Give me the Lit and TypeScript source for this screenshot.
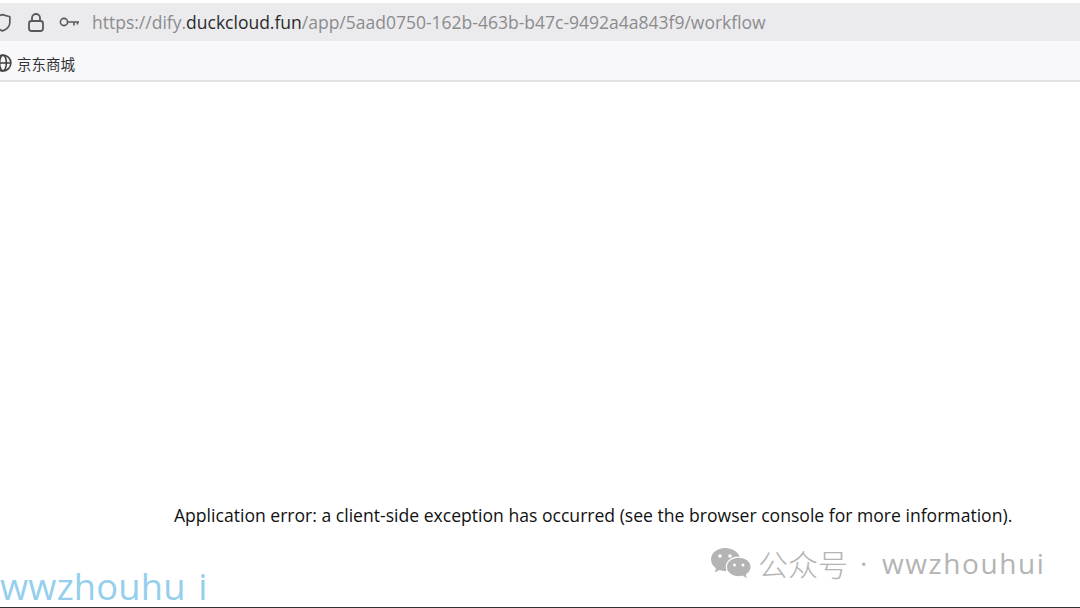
import { LitElement, html, css } from 'lit';
import { customElement } from 'lit/decorators.js';

@customElement('app-root')
export class AppRoot extends LitElement {
  static styles = css`
    :host {
      display: flex;
      flex-direction: column;
      position: relative;
      width: 1080px;
      height: 608px;
      overflow: hidden;
      background: #fff;
      font-family: 'Open Sans', 'Noto Sans CJK SC', sans-serif;
    }

    .address {
      display: flex;
      align-items: center;
      height: 38px;
      margin-top: 3px;
      box-sizing: border-box;
      background: #ebebed;
      flex-shrink: 0;
    }

    .address svg {
      flex-shrink: 0;
      display: block;
    }

    .shield { margin-left: -6px; }
    .lock { margin-left: 16px; }
    .key { margin-left: 14px; }

    .url {
      margin-left: 12px;
      font-size: 17.5px;
      color: #8b8b8e;
      white-space: nowrap;
    }

    .url b {
      font-weight: 400;
      color: #2a2a2c;
    }

    .bookmarks {
      display: flex;
      align-items: center;
      height: 41px;
      padding-top: 5px;
      box-sizing: border-box;
      background: #f8f8fa;
      border-bottom: 2px solid #e2e2e2;
      flex-shrink: 0;
    }

    .bookmarks svg {
      flex-shrink: 0;
      display: block;
    }

    .globe { margin-left: -6px; }

    .bookmark {
      margin-left: 5px;
      font-family: 'Noto Sans CJK SC', sans-serif;
      font-size: 14.5px;
      color: #333;
    }

    .content {
      flex: 1;
      display: flex;
      align-items: flex-end;
      padding: 0 0 80px 174px;
      border-bottom: 1px solid #333;
    }

    .error {
      font-size: 17.58px;
      line-height: 24px;
      color: #111;
      white-space: nowrap;
    }

    .mark-left {
      position: absolute;
      left: 0;
      top: 566px;
      font-size: 36.3px;
      line-height: 40px;
      color: #95cfec;
      letter-spacing: 0.2px;
      word-spacing: 3px;
      white-space: nowrap;
    }

    .mark-right {
      position: absolute;
      left: 710px;
      top: 544px;
      display: flex;
      align-items: center;
      color: #b4b4b4;
      white-space: nowrap;
    }

    .mark-right .cn {
      margin-left: 7px;
      font-family: 'Noto Sans CJK SC', sans-serif;
      font-size: 30px;
      line-height: 38px;
      font-weight: 300;
    }

    .mark-right .dot {
      margin-left: 12px;
      font-size: 28px;
      line-height: 38px;
      width: 8px;
      font-weight: 400;
    }

    .mark-right .name {
      margin-left: 14px;
      font-size: 28px;
      line-height: 38px;
      letter-spacing: 1.6px;
    }
  `;

  render() {
    return html`
      <div class="address">
        <svg class="shield" width="17" height="21" viewBox="0 0 16 20" fill="none" stroke="#59595c" stroke-width="1.6">
          <path d="M8 2.5 L15 4.5 V10 C15 14 12 16.5 8 18 C4 16.5 1 14 1 10 V4.5 Z" stroke-linejoin="round" />
        </svg>
        <svg class="lock" width="18" height="20" viewBox="0 0 18 20" fill="none" stroke="#59595c" stroke-width="1.8">
          <rect x="2" y="9" width="14" height="10" rx="2.5" />
          <path d="M5 9 V6 A4 4 0 0 1 13 6 V9" />
        </svg>
        <svg class="key" width="21" height="12" viewBox="0 0 21 12" fill="none" stroke="#59595c" stroke-width="1.6">
          <circle cx="5" cy="6" r="3.6" />
          <path d="M8.6 6 H20 M15 6 V9.5 M18.5 6 V8.5" />
        </svg>
        <span class="url">https://dify.<b>duckcloud.fun</b>/app/5aad0750-162b-463b-b47c-9492a4a843f9/workflow</span>
      </div>
      <div class="bookmarks">
        <svg class="globe" width="18" height="18" viewBox="0 0 16 16" fill="none" stroke="#444" stroke-width="1.4">
          <circle cx="8" cy="8" r="7" />
          <ellipse cx="8" cy="8" rx="3" ry="7" />
          <path d="M1 8 H15" />
        </svg>
        <span class="bookmark">京东商城</span>
      </div>
      <div class="content">
        <span class="error">Application error: a client-side exception has occurred (see the browser console for more information).</span>
      </div>
      <div class="mark-left">wwzhouhu i</div>
      <div class="mark-right">
        <svg width="41" height="36" viewBox="0 0 41 36" fill="#b4b4b4">
          <path d="M15 3 C7 3 1 8 1 14.5 C1 18.2 3 21.2 6 23.3 L4.8 27.5 L9.6 25 C11.4 25.6 13.2 25.9 15.2 25.9 L16.6 25.8 C16 24.4 15.8 23.2 15.8 22 C15.8 16 21.4 11.6 28.4 11.6 L29.6 11.6 C28 6.6 22 3 15 3 Z" />
          <path d="M40.6 22 C40.6 16.6 35 12.8 28.8 12.8 C22.2 12.8 17 16.8 17 22 C17 27.2 22.2 31.2 28.8 31.2 C30.2 31.2 31.6 31 32.8 30.6 L36.8 33.2 L35.8 29.4 C38.8 27.4 40.6 24.8 40.6 22 Z" />
          <circle cx="10" cy="11" r="1.8" fill="#fff" />
          <circle cx="20" cy="11" r="1.8" fill="#fff" />
          <circle cx="24.5" cy="20" r="1.5" fill="#fff" />
          <circle cx="33" cy="20" r="1.5" fill="#fff" />
        </svg>
        <span class="cn">公众号</span>
        <span class="dot">·</span>
        <span class="name">wwzhouhui</span>
      </div>
    `;
  }
}
